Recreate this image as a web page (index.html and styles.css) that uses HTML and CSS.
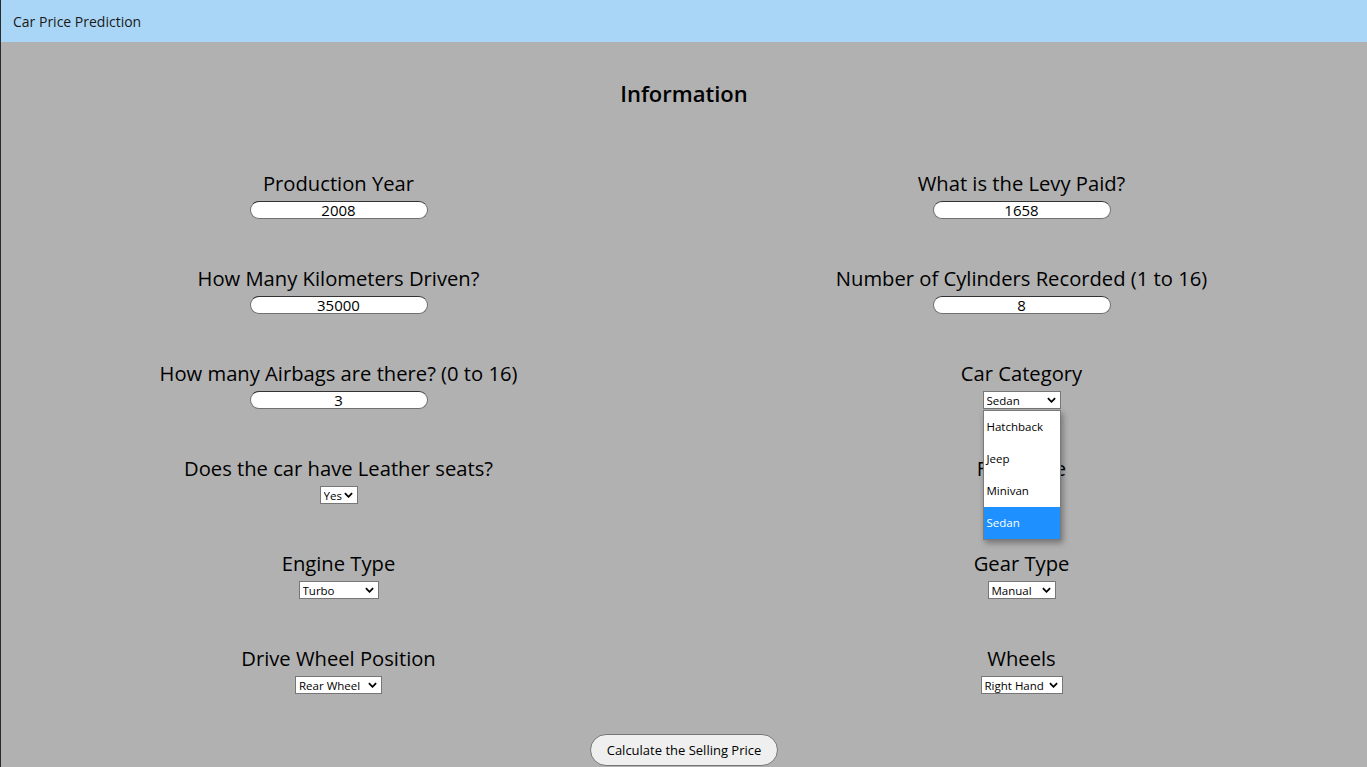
FILE: index.html
```html
<!DOCTYPE html>
<html lang="en">
<head>
<meta charset="utf-8">
<title>Car Price Prediction</title>
<link rel="stylesheet" href="styles.css">
</head>
<body>
<header class="topbar">Car Price Prediction</header>
<main class="content">
  <h2 class="title">Information</h2>
  <form class="grid">
    <div class="field">
      <label class="label">Production Year</label>
      <input class="num" type="text" value="2008">
    </div>
    <div class="field">
      <label class="label">What is the Levy Paid?</label>
      <input class="num" type="text" value="1658">
    </div>
    <div class="field">
      <label class="label">How Many Kilometers Driven?</label>
      <input class="num" type="text" value="35000">
    </div>
    <div class="field">
      <label class="label">Number of Cylinders Recorded (1 to 16)</label>
      <input class="num" type="text" value="8">
    </div>
    <div class="field">
      <label class="label">How many Airbags are there? (0 to 16)</label>
      <input class="num" type="text" value="3">
    </div>
    <div class="field">
      <label class="label">Car Category</label>
      <span class="sel w-sedan">
        <select><option>Sedan</option></select>
        <svg class="chev" viewBox="0 0 10 6"><path d="M1 1 L5 5 L9 1" /></svg>
        <div class="popup">
          <div class="opt">Hatchback</div>
          <div class="opt">Jeep</div>
          <div class="opt">Minivan</div>
          <div class="opt active">Sedan</div>
        </div>
      </span>
    </div>
    <div class="field">
      <label class="label">Does the car have Leather seats?</label>
      <span class="sel w-yes">
        <select><option>Yes</option></select>
        <svg class="chev" viewBox="0 0 10 6"><path d="M1 1 L5 5 L9 1" /></svg>
      </span>
    </div>
    <div class="field">
      <label class="label">Fuel Type</label>
      <span class="sel w-petrol">
        <select><option>Petrol</option></select>
        <svg class="chev" viewBox="0 0 10 6"><path d="M1 1 L5 5 L9 1" /></svg>
      </span>
    </div>
    <div class="field">
      <label class="label">Engine Type</label>
      <span class="sel w-turbo">
        <select><option>Turbo</option></select>
        <svg class="chev" viewBox="0 0 10 6"><path d="M1 1 L5 5 L9 1" /></svg>
      </span>
    </div>
    <div class="field">
      <label class="label">Gear Type</label>
      <span class="sel w-manual">
        <select><option>Manual</option></select>
        <svg class="chev" viewBox="0 0 10 6"><path d="M1 1 L5 5 L9 1" /></svg>
      </span>
    </div>
    <div class="field">
      <label class="label">Drive Wheel Position</label>
      <span class="sel w-rear">
        <select><option>Rear Wheel</option></select>
        <svg class="chev" viewBox="0 0 10 6"><path d="M1 1 L5 5 L9 1" /></svg>
      </span>
    </div>
    <div class="field">
      <label class="label">Wheels</label>
      <span class="sel w-right">
        <select><option>Right Hand</option></select>
        <svg class="chev" viewBox="0 0 10 6"><path d="M1 1 L5 5 L9 1" /></svg>
      </span>
    </div>
  </form>
  <div class="actions">
    <button class="btn" type="button">Calculate the Selling Price</button>
  </div>
</main>
</body>
</html>
```
FILE: styles.css
```css
html, body {
  margin: 0;
  padding: 0;
  height: 100%;
}
body {
  font-family: "Open Sans", "Noto Sans", sans-serif;
  background: #b1b1b1;
  color: #000;
  border-left: 1px solid #2a2a2a;
  overflow: hidden;
}
.topbar {
  box-sizing: border-box;
  height: 42px;
  line-height: 42px;
  padding-top: 1px;
  background: #a9d6f6;
  padding-left: 12px;
  font-size: 14px;
  color: #1a1a1a;
}
.content {
  display: flex;
  flex-direction: column;
}
.title {
  margin: 37px 0 0;
  height: 28px;
  line-height: 28px;
  text-align: center;
  font-size: 22px;
  font-weight: 600;
}
.grid {
  display: grid;
  grid-template-columns: 1fr 1fr;
  row-gap: 46px;
  margin: 63px 4px 0 -4px;
}
.field {
  display: flex;
  flex-direction: column;
  align-items: center;
  gap: 4px;
}
.label {
  font-size: 20.2px;
  font-weight: 500;
  line-height: 27px;
  color: #000;
}
.num {
  box-sizing: border-box;
  width: 178px;
  height: 18px;
  border: 1px solid #707070;
  border-top-color: #333;
  border-radius: 9px;
  background: #fff;
  text-align: center;
  font-family: "Open Sans", "Noto Sans", sans-serif;
  font-size: 15px;
  line-height: 16px;
  padding: 0;
  color: #000;
}
.sel {
  position: relative;
  display: inline-block;
  height: 18px;
}
.sel select {
  appearance: none;
  -webkit-appearance: none;
  box-sizing: border-box;
  height: 18px;
  width: 100%;
  border: 1px solid #767676;
  border-radius: 0;
  background: #fff;
  font-family: "Open Sans", "Noto Sans", sans-serif;
  font-size: 11.5px;
  padding: 0 0 0 3px;
  color: #000;
  display: block;
}
.chev {
  position: absolute;
  right: 5px;
  top: 6px;
  width: 9px;
  height: 6px;
  pointer-events: none;
}
.chev path {
  fill: none;
  stroke: #000;
  stroke-width: 2;
}
.w-sedan { width: 78px; }
.w-yes { width: 38px; }
.w-petrol { width: 72px; }
.w-turbo { width: 80px; }
.w-manual { width: 68px; }
.w-rear { width: 87px; }
.w-right { width: 82px; }
.popup {
  position: absolute;
  left: 0;
  top: 19px;
  width: 78px;
  box-sizing: border-box;
  background: #fff;
  border: 1px solid #7a7a7a;
  box-shadow: 2px 3px 6px rgba(0, 0, 0, 0.35);
  z-index: 5;
}
.opt {
  height: 32px;
  line-height: 32px;
  padding-left: 3px;
  font-size: 11.5px;
  color: #000;
}
.opt.active {
  background: #1e90ff;
  color: #fff;
}
.actions {
  display: flex;
  justify-content: center;
  margin-top: 40px;
}
.btn {
  box-sizing: border-box;
  width: 188px;
  height: 32px;
  border: 1px solid #767676;
  border-radius: 16px;
  background: #efefef;
  font-family: "Open Sans", "Noto Sans", sans-serif;
  font-size: 13px;
  color: #000;
}
```
